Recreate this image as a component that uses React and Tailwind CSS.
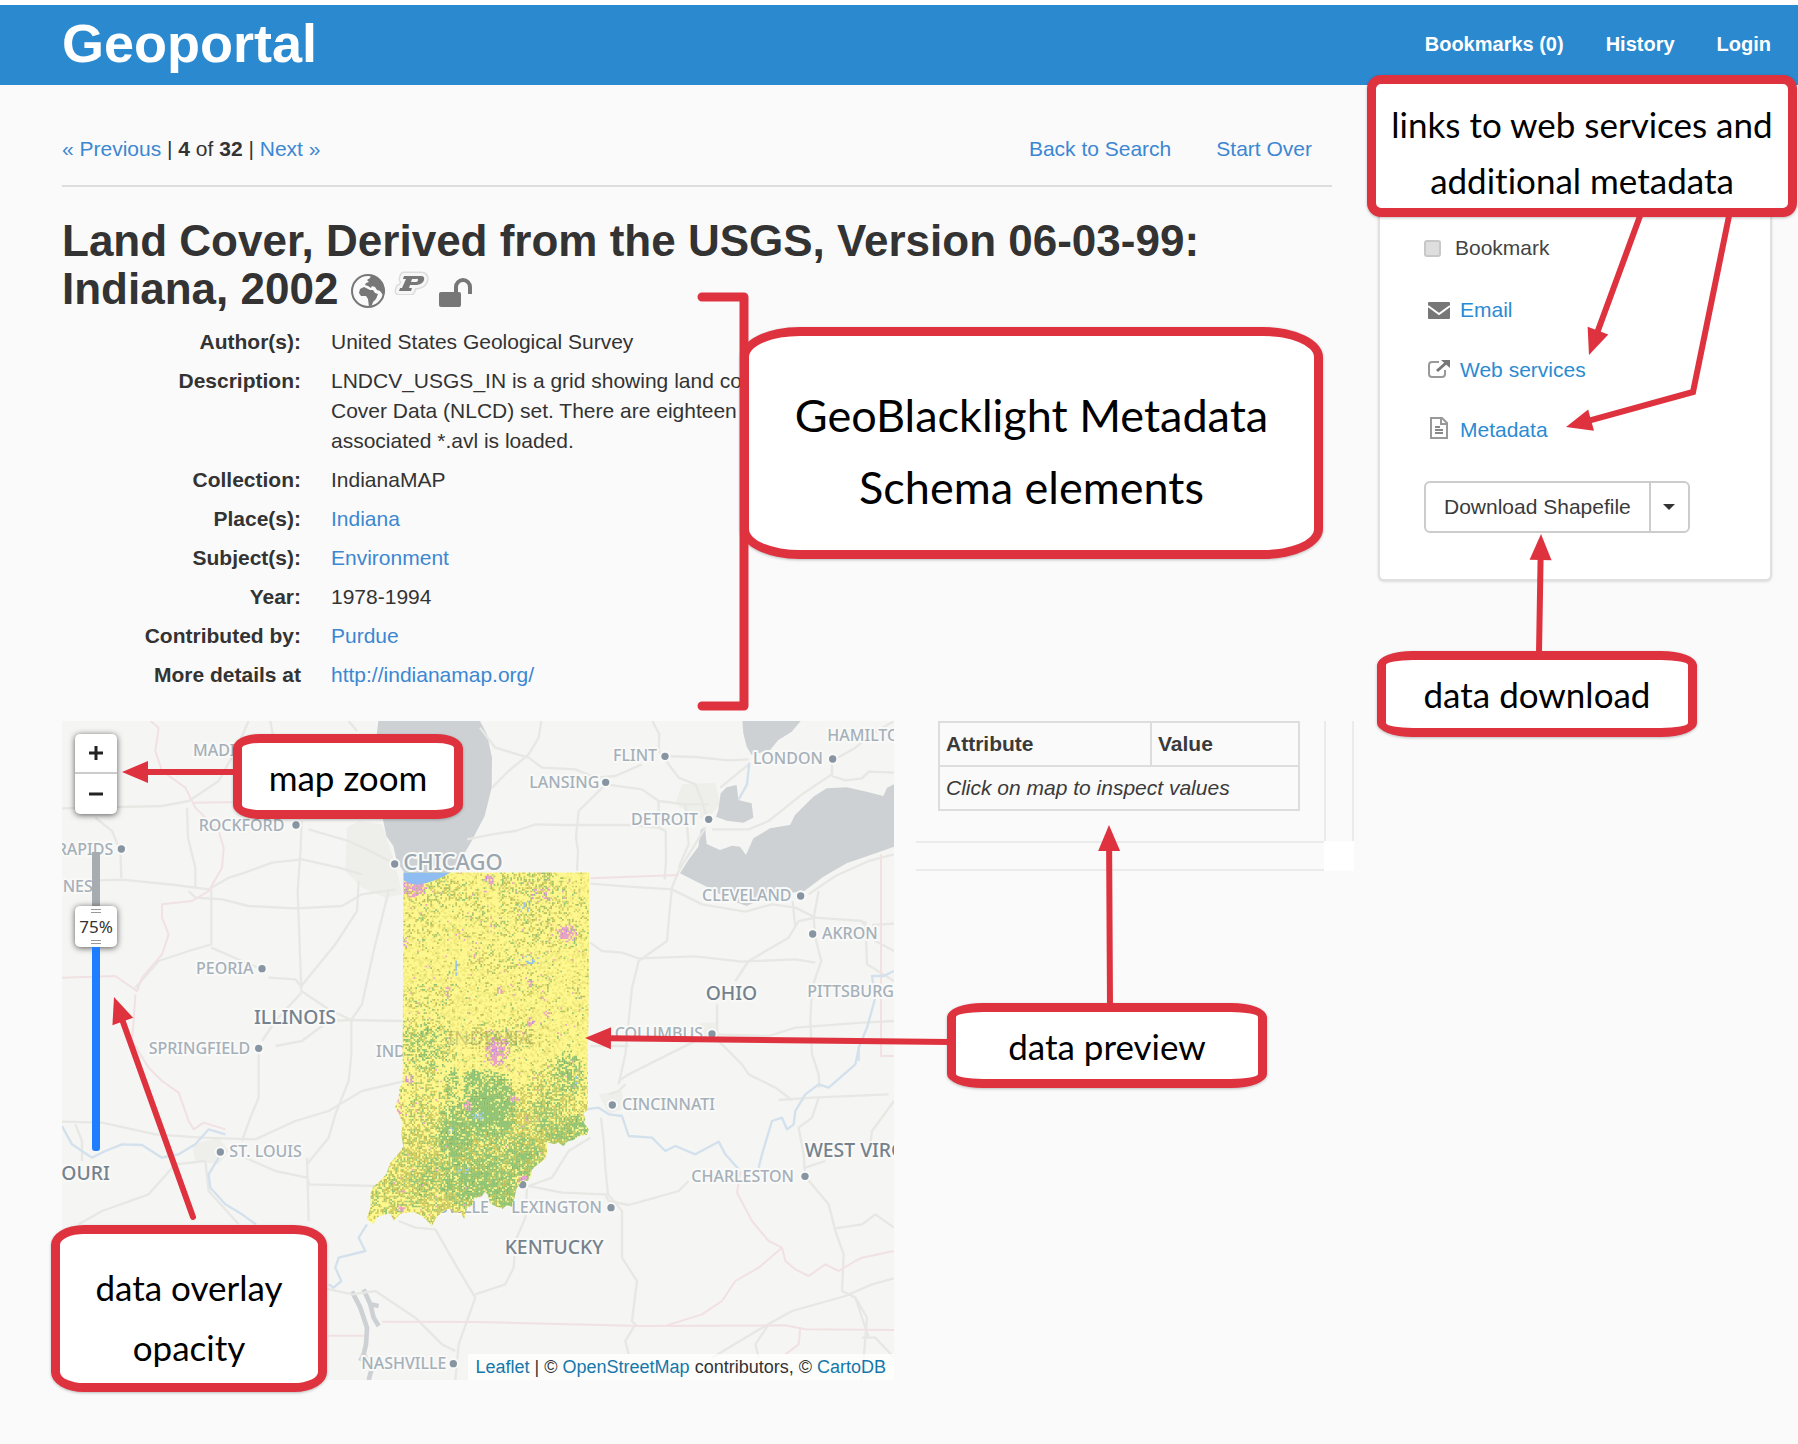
import React from "react";

const RED = "#df323f";

/* ---------- land cover raster ---------- */

const CELL = 5;
const OUTLINE =
  "M190 97H748L746 480 742 810 730 820 736 838 732 850 746 868 740 885 722 886 700 900 684 904 670 918 656 908 640 912 620 905 622 935 616 955 600 968 590 976 575 990 574 1008 562 1024 548 1020 530 1045 524 1070 515 1100 500 1096 488 1106 470 1100 450 1090 444 1064 435 1055 424 1070 404 1074 396 1096 380 1105 372 1138 362 1115 345 1118 330 1105 312 1112 290 1130 275 1158 258 1138 240 1125 222 1116 200 1118 180 1122 162 1142 150 1120 130 1125 112 1132 100 1152 80 1138 92 1100 92 1060 100 1040 124 1020 140 1000 150 970 172 945 190 920 184 880 188 850 178 825 165 800 176 775 178 745 188 730Z";

// x, y, radius x, radius y, strength
const FOREST = [
  [445, 800, 70, 90, 0.9],
  [400, 710, 30, 22, 0.8],
  [345, 880, 45, 90, 0.7],
  [400, 1010, 90, 80, 0.6],
  [490, 1060, 50, 60, 0.55],
  [330, 740, 22, 50, 0.5],
  [680, 700, 40, 60, 0.45],
  [690, 880, 70, 50, 0.5],
  [250, 620, 70, 60, 0.3],
  [540, 950, 60, 60, 0.5],
  [260, 1010, 40, 50, 0.3],
  [620, 820, 40, 60, 0.35],
];
const SCRUB = [
  [560, 130, 90, 50, 0.55],
  [300, 150, 90, 40, 0.5],
  [240, 260, 60, 50, 0.3],
  [600, 220, 120, 100, 0.3],
  [400, 230, 60, 50, 0.25],
  [260, 470, 80, 35, 0.3],
  [480, 360, 90, 30, 0.3],
  [480, 590, 90, 45, 0.45],
  [250, 620, 80, 90, 0.4],
  [590, 440, 40, 50, 0.2],
  [600, 900, 150, 140, 0.7],
  [350, 1000, 260, 170, 0.6],
  [250, 800, 70, 90, 0.35],
  [660, 760, 90, 90, 0.5],
];
const TOWNS = [
  [470, 630, 30, 36, 0.75],
  [678, 278, 24, 22, 0.7],
  [215, 140, 36, 22, 0.8],
  [446, 118, 16, 14, 0.6],
  [190, 305, 10, 14, 0.6],
  [475, 445, 10, 12, 0.6],
  [568, 545, 12, 12, 0.7],
  [622, 520, 12, 9, 0.6],
  [208, 712, 12, 14, 0.7],
  [385, 795, 14, 14, 0.4],
  [520, 775, 10, 10, 0.6],
  [180, 1105, 12, 9, 0.7],
  [550, 1020, 18, 12, 0.7],
  [570, 425, 9, 16, 0.6],
  [320, 455, 10, 16, 0.4],
  [615, 160, 50, 20, 0.15],
  [170, 800, 10, 60, 0.3],
];
const WATER = [
  [412, 825, 14, 12, 0.7],
  [345, 385, 3, 20, 0.9],
  [560, 200, 22, 16, 0.2],
  [570, 358, 30, 12, 0.2],
  [706, 700, 4, 22, 0.7],
  [330, 870, 6, 8, 0.6],
  [368, 990, 24, 8, 0.4],
];

function field(blobs, x, y) {
  let best = 0;
  for (const [cx, cy, rx, ry, k] of blobs) {
    const d = ((x - cx) / rx) ** 2 + ((y - cy) / ry) ** 2;
    if (d < 1.6) best = Math.max(best, k * (1 - d / 1.6) ** 0.5);
  }
  return best;
}

function buildRaster() {
  let seed = 20021999;
  const rnd = () => {
    seed = (seed * 1664525 + 1013904223) >>> 0;
    return seed / 4294967296;
  };
  const layers = {
    "#efe97c": "",
    "#d3cf64": "",
    "#bcbf5a": "",
    "#93c576": "",
    "#84b468": "",
    "#e8a3c4": "",
    "#cd8fdc": "",
    "#93c3e6": "",
  };
  for (let y = 97; y < 1160; y += CELL) {
    for (let x = 76; x < 748; x += CELL) {
      const a = rnd();
      const b = rnd();
      const south = Math.max(0, Math.min(1, (y - 640) / 260));
      let c = null;
      if (a < field(WATER, x, y)) c = "#93c3e6";
      else if (a < field(TOWNS, x, y)) c = b < 0.75 ? "#e8a3c4" : "#cd8fdc";
      else if (a < field(FOREST, x, y)) c = b < 0.8 ? "#93c576" : "#84b468";
      else if (b < field(SCRUB, x, y) * 0.75 + 0.07 + south * 0.16)
        c = a < 0.55 ? "#d3cf64" : a < 0.8 ? "#bcbf5a" : "#93c576";
      else if (b < 0.36) c = "#efe97c";
      else if (b > 0.985) c = a < 0.6 ? "#e8a3c4" : "#93c576";
      if (c) layers[c] += `M${x} ${y}h${CELL}v${CELL}h-${CELL}z`;
    }
  }
  return Object.entries(layers);
}

const RASTER = buildRaster();

function LandCover() {
  return (
    <g transform="translate(834 357)">
      <clipPath id="state-outline">
        <path d={OUTLINE} />
      </clipPath>
      <g clipPath="url(#state-outline)">
        <rect x="76" y="97" width="674" height="1064" fill="#fdf78e" />
        {RASTER.map(([color, d]) => (
          <path key={color} d={d} fill={color} />
        ))}
        <path d="M190 97H332Q300 118 262 128 220 142 190 120Z" fill="#8fbdf2" />
      </g>
    </g>
  );
}

/* ---------- base map ---------- */

const CITIES = [
  // label x, baseline, text, dot x, dot y
  [393, 106, "MADISON", 0, 0],
  [1130, 113, "EE", 0, 0],
  [410, 329, "ROCKFORD", 702, 312],
  [-16, 401, "RAPIDS", 178, 384],
  [2, 513, "NES", 0, 0],
  [402, 760, "PEORIA", 600, 743],
  [260, 999, "SPRINGFIELD", 590, 982],
  [942, 1007, "INDI", 0, 0],
  [1653, 121, "FLINT", 1809, 106],
  [1402, 202, "LANSING", 1631, 184],
  [1707, 311, "DETROIT", 1940, 295],
  [2073, 130, "LONDON", 2312, 114],
  [2296, 59, "HAMILTON", 0, 0],
  [1920, 540, "CLEVELAND", 2216, 525],
  [2280, 654, "AKRON", 2252, 639],
  [2236, 828, "PITTSBURGH", 0, 0],
  [1658, 955, "COLUMBUS", 1950, 939],
  [1680, 1168, "CINCINNATI", 1651, 1152],
  [1888, 1382, "CHARLESTON", 2229, 1366],
  [1130, 1477, "SVILLE", 0, 0],
  [1348, 1477, "LEXINGTON", 1647, 1460],
  [502, 1309, "ST. LOUIS", 475, 1293],
  [898, 1944, "NASHVILLE", 1174, 1928],
];

const STATES = [
  [576, 908, "ILLINOIS"],
  [-2, 1376, "OURI"],
  [1931, 838, "OHIO"],
  [2228, 1308, "WEST VIRGINIA"],
  [1328, 1600, "KENTUCKY"],
];

function BaseMap() {
  return (
    <svg
      className="block h-full w-full"
      viewBox="0 0 2496 1977"
      preserveAspectRatio="xMinYMin slice"
      role="img"
      aria-label="Map preview of Indiana land cover"
    >
      <rect width="2496" height="1977" fill="#f5f5f3" />

      <g fill="#eeeeea">
        <path d="M855 320 890 300 960 310 990 400 1010 470 1020 520 970 530 900 500 850 450Z" />
        <path d="M1860 190 1960 185 1975 250 1930 300 1840 250Z" />
        <path d="M390 1270 470 1250 500 1290 470 1330 400 1320Z" />
        <path d="M1610 1120 1680 1110 1690 1160 1640 1180Z" />
        <path d="M1915 905 1970 905 1965 960 1920 960Z" />
      </g>

      <g fill="#cdd1d4">
        <path d="M949 0H1254L1275 40 1290 110 1289 200 1268 285 1226 365 1188 430 1160 460H1030L1004 420 994 375 973 345 962 290 950 160 942 60Z" />
        <path d="M2041 0H2216L2189 32 2149 57 2124 87 2069 102 2054 77 2044 37Z" />
        <path d="M1994 199 2024 192 2029 237 2069 247 2074 290 2044 305 1994 299 1962 287 1969 267 1976 217Z" />
        <path d="M2496 190 2475 200 2464 225 2414 212 2354 199 2294 202 2254 227 2199 282 2184 312 2124 322 2074 352 2052 402 2034 377 2010 374 1974 387 1934 369 1929 317 1916 327 1909 377 1879 417 1854 457 1904 482 1934 497 2004 537 2054 555 2094 537 2154 517 2224 512 2284 467 2354 427 2454 392 2496 377Z" />
      </g>

      <g fill="none" stroke="#cdd1d4" strokeWidth="14" strokeLinejoin="round">
        <path d="M870 1712 895 1760 915 1820 912 1870 905 1900 930 1940 920 1977" />
        <path d="M905 1705 925 1750 935 1790 950 1815M925 1750 950 1755M905 1900 895 1920" />
      </g>

      <g fill="none" stroke="#e7e7e4" strokeWidth="7" strokeLinejoin="round">
        <path d="M0 262 300 255 380 240 470 180 520 90 560 0" />
        <path d="M625 0 632 40M860 0 885 30" />
        <path d="M100 290 150 330 175 390 178 470" />
        <path d="M375 260 378 350 400 440 400 500" />
        <path d="M110 478 180 476 340 492 440 505 500 470 540 458 630 425 720 415 830 440 900 460" />
        <path d="M380 510 400 530 480 535 560 555 700 562 840 555 900 520 1000 505" />
        <path d="M448 505V670L380 690 290 720 220 800" />
        <path d="M448 680 540 720 600 745" />
        <path d="M719 300 716 380 707 510 714 700 718 810 800 865 868 897 868 1000 860 1080 820 1180 800 1250 735 1330" />
        <path d="M740 325 860 360 935 395 1000 430" />
        <path d="M890 480 885 570 820 670 718 795M620 770 700 775 720 800" />
        <path d="M980 510 935 690 900 850 868 897 1020 900" />
        <path d="M868 897 800 900 720 960 640 975M718 815 640 900 600 960" />
        <path d="M590 1000 590 1130 565 1190 540 1260" />
        <path d="M0 1202 120 1205 280 1240 420 1250 580 1255 700 1200 800 1170 900 1110 1020 1082" />
        <path d="M40 1210 60 1260 60 1320M50 1510 120 1470 260 1420 340 1330 430 1320" />
        <path d="M550 1310 640 1350 735 1370 742 1390 940 1395M735 1310 740 1500" />
        <path d="M430 1320 440 1410 530 1510" />
        <path d="M1010 1500 1060 1520 1120 1525 1180 1630 1240 1730 1190 1870 1180 1977" />
        <path d="M780 1700 870 1720 940 1710 1060 1790 1140 1870 1180 1890" />
        <path d="M1240 1720 1330 1690 1355 1640 1360 1560 1390 1490 1395 1400" />
        <path d="M1254 20 1300 80 1400 110 1440 140 1540 145 1600 170 1660 165 1740 130" />
        <path d="M1290 200 1340 150 1400 100 1430 50 1438 0" />
        <path d="M1215 355 1290 340 1360 330 1420 310 1500 312 1700 312 1790 320" />
        <path d="M1545 450 1548 390 1542 350 1550 270 1631 190 1740 205 1790 240 1870 250 1940 250" />
        <path d="M1771 0 1792 40 1790 90 1850 170 1900 190 1920 240 1935 290" />
        <path d="M1800 105 1900 108 2000 118 2060 115M2060 130 1975 200" />
        <path d="M1790 240V320L1811 330 1812 420 1808 475M1870 250 1880 370 1850 440" />
        <path d="M1930 320 1850 450 1830 500 1820 600 1815 660 1730 720 1710 800 1700 900 1690 1000 1670 1090" />
        <path d="M1585 488 1700 497 1830 505 1920 550 2050 572 2130 550 2200 560 2260 590 2400 600 2440 660 2496 690" />
        <path d="M1585 665 1620 690 1680 695 1730 712 1900 706 2040 722 2200 715 2260 725" />
        <path d="M2020 780 2060 720 2180 650 2210 600 2260 590" />
        <path d="M2192 540 2200 620M2270 510 2255 590 2260 650 2278 720 2250 800 2245 900 2250 1000 2270 1060 2272 1100" />
        <path d="M1950 325 2060 325 2120 300 2220 220 2310 160 2310 120 2380 80 2430 40 2496 0" />
        <path d="M2310 165 2350 178 2400 172 2420 152 2496 155M2496 400 2420 420 2320 465 2240 520" />
        <path d="M2410 600 2415 730 2496 780M2430 612 2496 608" />
        <path d="M1950 940 2120 945 2200 920 2400 905 2496 900" />
        <path d="M1965 960 1965 850M1670 1080 1700 1060 1800 1010 1940 940M1970 960 2040 1030 2060 1060 2140 1100 2190 1137" />
        <path d="M1585 975H1700M1690 1090 1670 1110 1640 1120M2150 1137 2250 1130 2480 1120" />
        <path d="M1617 1190 1625 1260 1630 1340 1638 1420 1680 1470 1680 1610 1725 1680 1710 1800 1720 1810 1690 1860 1700 1900" />
        <path d="M1585 1250 1520 1290 1470 1370 1400 1395 1500 1415 1630 1420 1640 1440 1700 1452 1780 1430 1850 1410 1880 1380" />
        <path d="M2270 1130 2250 1190 2210 1220 2225 1300 2229 1366 2300 1450 2320 1530 2345 1600 2340 1710 2380 1730 2415 1790 2400 1977" />
        <path d="M2229 1340 2290 1320M2496 1140 2430 1230 2425 1270M2320 1522 2400 1510 2440 1480 2496 1520" />
        <path d="M1950 1910 2100 1820 2190 1770 2350 1725 2430 1690 2496 1672" />
        <path d="M2120 1810 2080 1870 2090 1910M2400 1850 2440 1850 2496 1910M2380 1730 2420 1850" />
      </g>

      <g fill="none" stroke="#f1e1e2" strokeWidth="6" strokeLinejoin="round">
        <path d="M265 0 290 20 280 90 300 150 370 200 400 260 470 330 485 380 480 440 440 510 390 540 300 550 300 590 320 640 300 700 240 770 225 810 160 765 0 770" />
        <path d="M395 245 540 243M220 820 215 900 210 960 235 1000 260 1040 300 1080 350 1115 380 1200 395 1225 425 1205 490 1225" />
        <path d="M1585 472 1850 462" />
        <path d="M2457 400V1005H2496" />
        <path d="M800 1844H905M960 1802 1250 1803 1740 1815 2170 1813 2230 1825 2496 1827" />
        <path d="M2036 1350 2025 1415 2070 1500 2120 1560 2160 1580 2170 1620 2200 1645 2240 1665 2290 1630 2330 1650 2380 1620 2400 1610 2496 1590" />
        <path d="M1815 1813 1920 1780 1980 1740 2020 1680 2090 1640 2160 1580M2215 1820 2210 1870 2170 1900" />
      </g>

      <g fill="none" stroke="#d3e1ed" strokeWidth="7" strokeLinejoin="round">
        <path d="M0 1215 30 1270 60 1290 90 1310 130 1290 180 1270 240 1272 300 1310 350 1300 400 1270 440 1225 490 1240" />
        <path d="M470 1310 440 1360 445 1400 490 1450 540 1480 582 1510M915 1510 890 1550 910 1590 830 1610 820 1640 838 1680 815 1700 800 1690" />
        <path d="M1570 1165 1610 1160 1640 1180 1680 1185 1700 1245 1770 1250 1810 1290 1840 1275 1900 1300 1970 1262 1990 1300 2030 1345M2090 1340 2100 1300 2115 1250 2130 1200 2160 1190 2175 1225 2195 1210 2200 1170 2230 1120 2270 1090 2300 1100 2380 1030 2395 960" />
        <path d="M2062 125 2055 190 2030 235M2496 750 2465 765 2430 765 2440 830 2415 920 2390 980 2390 1020" />
      </g>

      <g
        fontFamily='"Noto Sans", "Open Sans", sans-serif'
        fontWeight="500"
        stroke="#f9f9f8"
        strokeWidth="12"
        strokeLinejoin="round"
        paintOrder="stroke"
      >
        <g fontSize="48" fill="#a5b0b9">
          {CITIES.map(([x, y, name]) => (
            <text key={name} x={x} y={y}>
              {name}
            </text>
          ))}
        </g>
        <text x="1024" y="448" fontSize="66" fill="#9aa6b0">
          CHICAGO
        </text>
        <g fill="#8795a2">
          <circle cx="998" cy="429" r="11" />
          <circle cx="1382" cy="1391" r="11" />
          {CITIES.filter((c) => c[3]).map(([, , name, x, y]) => (
            <circle key={name} cx={x} cy={y} r="11" />
          ))}
        </g>
        <g fontSize="58" fill="#74828d">
          {STATES.map(([x, y, name]) => (
            <text key={name} x={x} y={y}>
              {name}
            </text>
          ))}
        </g>
      </g>

      <LandCover />
      <text
        x="1156"
        y="972"
        fontFamily='"Noto Sans", sans-serif'
        fontSize="60"
        fill="#8f8a50"
        fillOpacity="0.4"
      >
        INDIANA
      </text>
    </svg>
  );
}

function MapPanel() {
  return (
    <div className="relative h-[659px] min-w-0 flex-1 overflow-hidden bg-[#f5f5f3]">
      <BaseMap />

      <div className="absolute left-[13px] top-[13px] flex w-[42px] flex-col overflow-hidden rounded-[5px] bg-white text-black shadow-[0_1px_6px_rgba(0,0,0,0.65)]">
        <button
          type="button"
          aria-label="Zoom in"
          className="flex h-10 items-center justify-center border-b-2 border-[#ccc]"
        >
          <svg viewBox="0 0 14 14" className="size-[14px]" fill="none" stroke="#222" strokeWidth="3">
            <path d="M7 0V14M0 7H14" />
          </svg>
        </button>
        <button type="button" aria-label="Zoom out" className="flex h-10 items-center justify-center">
          <svg viewBox="0 0 14 14" className="size-[14px]" fill="none" stroke="#222" strokeWidth="3">
            <path d="M0 7H14" />
          </svg>
        </button>
      </div>

      <div className="absolute left-[13px] top-[131px] flex h-[299px] w-[42px] flex-col items-center">
        <div className="h-[54px] w-2 bg-[#a7acb0]" />
        <div className="flex h-[41px] w-[42px] flex-col items-center justify-between rounded-[5px] bg-white py-[3px] shadow-[0_1px_6px_rgba(0,0,0,0.65)]">
          <span className="h-1 w-[10px] border-y border-[#999]" />
          <span className="font-['Noto_Sans',sans-serif] text-[17px] leading-5 text-[#333]">75%</span>
          <span className="h-1 w-[10px] border-y border-[#999]" />
        </div>
        <div className="w-2 flex-1 rounded-b-[3px] bg-[#1f7dff]" />
        <input
          type="range"
          min="0"
          max="100"
          defaultValue="75"
          aria-label="Layer opacity"
          className="absolute inset-0 h-full w-full cursor-pointer opacity-0 [direction:rtl] [writing-mode:vertical-lr]"
        />
      </div>

      <div className="absolute bottom-0 right-0 bg-white/75 px-2 text-lg leading-[26px] text-[#333]">
        <a href="#leaflet" className="text-[#1478ab]">Leaflet</a> | ©{" "}
        <a href="#osm" className="text-[#1478ab]">OpenStreetMap</a> contributors, ©{" "}
        <a href="#cartodb" className="text-[#1478ab]">CartoDB</a>
      </div>
    </div>
  );
}

/* ---------- page parts ---------- */

const LINK = "text-[#3c87d2]";

const FIELDS = [
  ["Author(s):", "United States Geological Survey"],
  [
    "Description:",
    <>
      LNDCV_USGS_IN is a grid showing land co
      <br />
      Cover Data (NLCD) set. There are eighteen c
      <br />
      associated *.avl is loaded.
    </>,
  ],
  ["Collection:", "IndianaMAP"],
  ["Place(s):", <a href="#indiana" className={LINK}>Indiana</a>],
  ["Subject(s):", <a href="#environment" className={LINK}>Environment</a>],
  ["Year:", "1978-1994"],
  ["Contributed by:", <a href="#purdue" className={LINK}>Purdue</a>],
  ["More details at", <a href="#indianamap" className={LINK}>http://indianamap.org/</a>],
];

function Header() {
  return (
    <header className="flex h-20 items-center justify-between bg-[#2b89d0] pl-[62px] pr-[27px] text-white">
      <a href="#home" className="pb-1 text-[54px] font-bold leading-none">Geoportal</a>
      <nav className="flex gap-[42px] pb-[2px] text-[20px] font-bold">
        <a href="#bookmarks">Bookmarks (0)</a>
        <a href="#history">History</a>
        <a href="#login">Login</a>
      </nav>
    </header>
  );
}

const PURDUE_P =
  "M10 5H27Q31 5 30 9T23 14H16L15 17H18L17 20H5L6 17H8L12 8H9ZM18 8 17 11H22Q24 11 24 9T22 8Z";

function TitleIcons() {
  return (
    <span className="ml-3 inline-flex items-end gap-2 align-[-5px]">
      <svg viewBox="0 0 36 36" className="size-9" aria-label="Raster">
        <circle cx="18" cy="18" r="16" fill="none" stroke="#777" strokeWidth="2" />
        <path
          fill="#777"
          d="M21 2 28 5 33 11 35 19 33 22 30 18 27 17 25 14 22 13 21 15 18 13 15 12 16 10 19 9 17 7 20 5ZM10 16 14 14 18 16 20 17 23 17 25 20 28 21 26 26 23 29 22 32 19 34 18 26 16 23 11 23 9 20Z"
        />
      </svg>
      <svg viewBox="0 0 36 24" className="mb-[14px] h-6 w-9" aria-label="Purdue" fillRule="evenodd" strokeLinejoin="round">
        <path d={PURDUE_P} fill="none" stroke="#dcdcdc" strokeWidth="9" />
        <path d={PURDUE_P} fill="#f6f6f6" stroke="#f6f6f6" strokeWidth="6" />
        <path d={PURDUE_P} fill="#777" />
      </svg>
      <svg viewBox="0 0 34 32" className="h-8 w-[34px]" aria-label="Public">
        <rect x="1" y="15" width="22" height="15" rx="2" fill="#777" />
        <path d="M18 16V10A7 7 0 0 1 32 10V17" fill="none" stroke="#777" strokeWidth="4" />
      </svg>
    </span>
  );
}

function Tools() {
  return (
    <aside className="w-[394px] flex-none pt-[50px]">
      <div className="rounded-md border-2 border-[#e0e0e0] bg-white pb-[46px] pl-11 pt-[96px] text-[21px] leading-[30px] shadow-sm">
        <label className="flex items-center gap-[14px] text-[#444]">
          <input
            type="checkbox"
            className="size-[17px] appearance-none rounded-[3px] border-2 border-[#c8c8c8] bg-[#dedede]"
          />
          Bookmark
        </label>
        <ul className="mt-8 space-y-[30px] pl-1 text-[#2b8bd2]">
          <li className="flex items-center gap-[10px]">
            <svg viewBox="0 0 22 17" className="w-[22px]" aria-hidden="true">
              <rect width="22" height="17" rx="1" fill="#777" />
              <path d="M0 4 11 12 22 4" fill="none" stroke="#fff" strokeWidth="2" />
            </svg>
            <a href="#email">Email</a>
          </li>
          <li className="flex items-center gap-[10px]">
            <svg viewBox="0 0 22 19" className="mb-1 w-[22px]" fill="none" aria-hidden="true">
              <path d="M11 3H4Q1 3 1 6V15Q1 18 4 18H14Q17 18 17 15V11" stroke="#999" strokeWidth="2" />
              <path d="M9 12 18 4" stroke="#777" strokeWidth="3" />
              <path d="M13 1H22V9Z" fill="#777" />
            </svg>
            <a href="#web-services">Web services</a>
          </li>
          <li className="flex items-center gap-[10px]">
            <svg viewBox="0 0 22 22" className="mb-1 w-[22px]" fill="none" stroke="#999" strokeWidth="2" aria-hidden="true">
              <path d="M3 1H14L19 6V21H3ZM13 1V7H19" />
              <path d="M7 10H12M7 13H15M7 16H15" stroke="#888" />
            </svg>
            <a href="#metadata">Metadata</a>
          </li>
        </ul>
        <div className="mt-9 inline-flex h-[52px] rounded-md border-2 border-[#ccc] text-[#3a3a3a]">
          <button type="button" className="border-r-2 border-[#ccc] px-[18px]">
            Download Shapefile
          </button>
          <button type="button" aria-label="More download formats" className="flex w-[37px] items-center justify-center">
            <svg viewBox="0 0 12 6" className="w-3" aria-hidden="true">
              <path d="M0 0H12L6 6Z" fill="#333" />
            </svg>
          </button>
        </div>
      </div>
    </aside>
  );
}

function Inspector() {
  return (
    <div className="grid w-[438px] flex-none grid-cols-[1fr_30px] grid-rows-[120px_30px] self-start">
      <div className="pl-[22px] pr-6">
        <table className="w-full border-collapse text-left text-[21px] leading-[30px] text-[#3a3a3a]">
          <thead>
            <tr>
              <th className="w-[212px] border-2 border-[#ddd] px-[6px] py-[6px]">Attribute</th>
              <th className="border-2 border-[#ddd] px-[6px] py-[6px]">Value</th>
            </tr>
          </thead>
          <tbody>
            <tr>
              <td colSpan={2} className="border-2 border-[#ddd] px-[6px] py-[6px] italic">
                Click on map to inspect values
              </td>
            </tr>
          </tbody>
        </table>
      </div>
      <div className="border-x-2 border-[#ebebeb]" />
      <div className="border-y-2 border-[#ebebeb]" />
      <div className="bg-white" />
    </div>
  );
}

/* ---------- annotations ---------- */

function Arrow({ points }) {
  const [x2, y2] = points[points.length - 1];
  const [x1, y1] = points[points.length - 2];
  const len = Math.hypot(x2 - x1, y2 - y1);
  const ux = (x2 - x1) / len;
  const uy = (y2 - y1) / len;
  const bx = x2 - ux * 26;
  const by = y2 - uy * 26;
  const shaft = [...points.slice(0, -1), [bx + ux * 2, by + uy * 2]];
  const head = [
    [x2, y2],
    [bx - uy * 11, by + ux * 11],
    [bx + uy * 11, by - ux * 11],
  ];
  return (
    <>
      <polyline points={shaft.join(" ")} fill="none" stroke={RED} strokeWidth="6" strokeLinecap="round" />
      <polygon points={head.join(" ")} fill={RED} />
    </>
  );
}

const CALLOUT =
  "absolute flex flex-col items-center justify-center border-[9px] border-[#df323f] bg-white text-center whitespace-nowrap shadow-[0_1px_3px_rgba(0,0,0,0.25)]";

function Annotations() {
  return (
    <div className="pointer-events-none absolute left-0 top-0 h-[1444px] w-[1798px] font-['Lato',sans-serif] text-black [font-variant-ligatures:none]">
      <div className={`${CALLOUT} left-[1367px] top-[75px] h-[142px] w-[430px] rounded-[14px] pt-3 text-[35px] leading-[56px]`}>
        <span>links to web services and</span>
        <span>additional metadata</span>
      </div>
      <div className={`${CALLOUT} left-[740px] top-[327px] h-[232px] w-[583px] rounded-[60px/30px] pt-4 text-[45px] leading-[72px]`}>
        <span>GeoBlacklight Metadata</span>
        <span>Schema elements</span>
      </div>
      <div className={`${CALLOUT} left-[1377px] top-[651px] h-[86px] w-[320px] rounded-[36px/14px] text-[35px] leading-[56px]`}>
        data download
      </div>
      <div className={`${CALLOUT} left-[233px] top-[734px] h-[85px] w-[230px] rounded-[27px/14px] text-[35px] leading-[56px]`}>
        map zoom
      </div>
      <div className={`${CALLOUT} left-[947px] top-[1003px] h-[85px] w-[320px] rounded-[36px/14px] text-[35px] leading-[56px]`}>
        data preview
      </div>
      <div className={`${CALLOUT} left-[51px] top-[1225px] h-[167px] w-[276px] rounded-[33px/20px] pt-4 text-[35px] leading-[60px]`}>
        <span>data overlay</span>
        <span>opacity</span>
      </div>
      <svg viewBox="0 0 1798 1444" className="absolute left-0 top-0 h-full w-full" aria-hidden="true">
        <path
          d="M702 297H744V706H702"
          fill="none"
          stroke={RED}
          strokeWidth="9"
          strokeLinecap="round"
          strokeLinejoin="round"
        />
        <Arrow points={[[1640, 216], [1589, 355]]} />
        <Arrow points={[[1729, 216], [1693, 392], [1566, 427]]} />
        <Arrow points={[[1539, 653], [1541, 534]]} />
        <Arrow points={[[1110, 1006], [1109, 825]]} />
        <Arrow points={[[950, 1042], [585, 1038]]} />
        <Arrow points={[[234, 772], [122, 772]]} />
        <Arrow points={[[193, 1217], [114, 997]]} />
      </svg>
    </div>
  );
}

export default function App() {
  return (
    <div className="relative min-h-screen overflow-hidden bg-[#fafafa] font-['Liberation_Sans',Arial,sans-serif] text-[#333]">
      <div className="h-[5px] bg-white" />
      <Header />
      <div className="flex items-start gap-[46px] pb-16 pl-[62px] pr-[26px]">
        <main className="min-w-0 flex-1">
          <div className="flex items-center justify-between border-b-2 border-[#ddd] pb-[21px] pr-5 pt-[49px] text-[21px] leading-[30px]">
            <div>
              <a href="#previous" className={LINK}>« Previous</a> | <b>4</b> of <b>32</b> |{" "}
              <a href="#next" className={LINK}>Next »</a>
            </div>
            <div className="flex gap-[45px]">
              <a href="#search" className={LINK}>Back to Search</a>
              <a href="#start" className={LINK}>Start Over</a>
            </div>
          </div>
          <h1 className="mt-[30px] text-[44px] font-bold leading-[48px]">
            Land Cover, Derived from the USGS, Version 06-03-99:
            <br />
            Indiana, 2002
            <TitleIcons />
          </h1>
          <dl className="mt-[14px] grid grid-cols-[239px_1fr] gap-x-[30px] gap-y-[9px] text-[21px] leading-[30px]">
            {FIELDS.map(([term, value]) => (
              <React.Fragment key={term}>
                <dt className="text-right font-bold">{term}</dt>
                <dd>{value}</dd>
              </React.Fragment>
            ))}
          </dl>
          <div className="-mr-[22px] mt-[31px] flex gap-[22px]">
            <MapPanel />
            <Inspector />
          </div>
        </main>
        <Tools />
      </div>
      <Annotations />
    </div>
  );
}
